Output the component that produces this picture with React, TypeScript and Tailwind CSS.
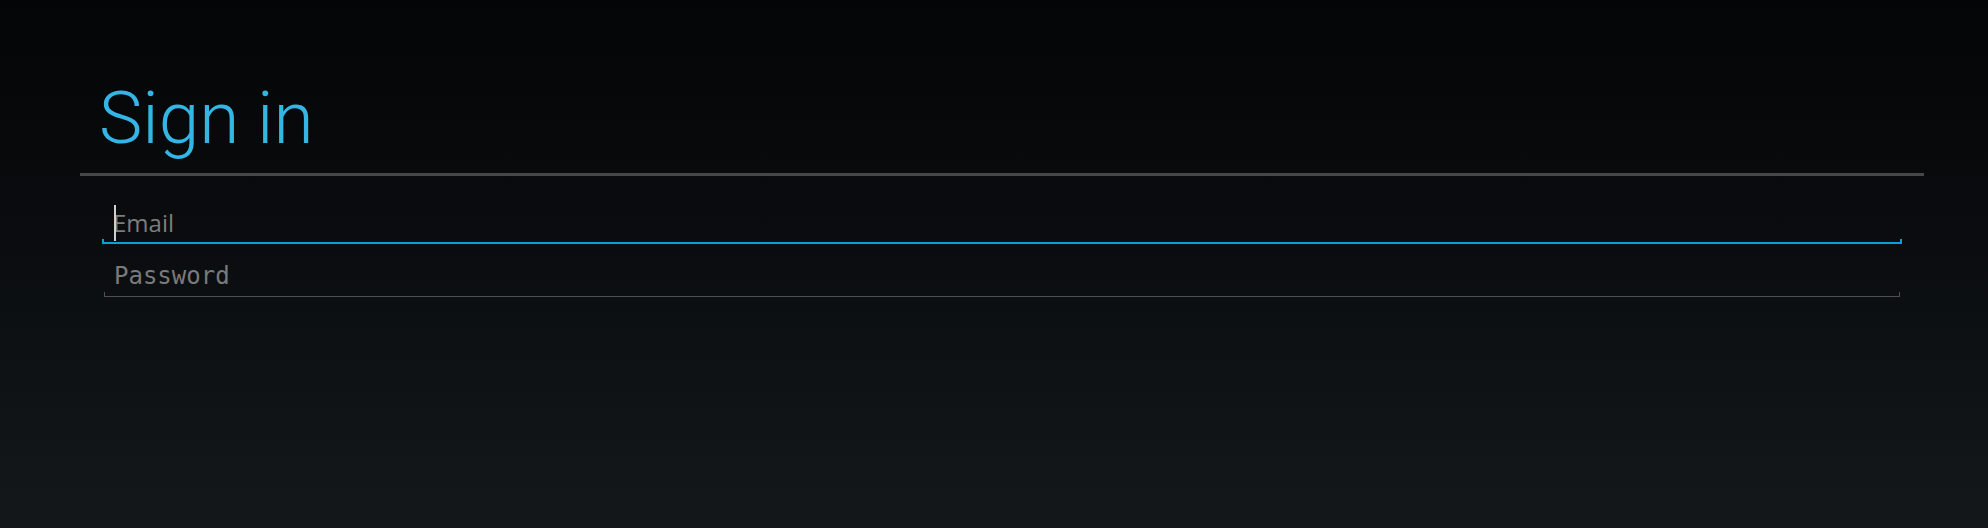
import React from "react";

export default function App() {
  return (
    <div className="w-[1988px] h-[528px] bg-gradient-to-b from-[#040506] to-[#14181b] overflow-hidden">
      <div className="pl-[80px] w-[1924px]">
        <h1
          className="pt-[82px] pl-[19px] text-[73px] leading-[73px] font-light text-[#33b5e5]"
          style={{ fontFamily: "Roboto, 'Liberation Sans', sans-serif" }}
        >
          Sign in
        </h1>
        <div className="mt-[18px] h-[3px] bg-[#474747]" />
        <div className="mt-[30px] ml-[22px] w-[1800px]">
          <div className="relative">
            <div className="absolute left-[12px] top-[-1px] w-[2px] h-[36px] bg-[#d0d0d0]" />
            <div
              className="pl-[11px] text-[24px] leading-[33px] text-[#7d7d7d]"
              style={{ fontFamily: "'Open Sans', 'DejaVu Sans', sans-serif" }}
            >
              Email
            </div>
            <div className="h-[5px] border-l-2 border-r-2 border-b-2 border-[#109dd4]" />
          </div>
          <div className="mt-[14px] relative">
            <div
              className="pl-[12px] pt-[3px] text-[24px] leading-[31px] text-[#7a7a7a]"
              style={{ fontFamily: "'DejaVu Sans Mono', 'Liberation Mono', monospace" }}
            >
              Password
            </div>
            <div className="mx-[2px] h-[5px] border-l border-r border-b border-[#4f4f4f]" />
          </div>
        </div>
      </div>
    </div>
  );
}
